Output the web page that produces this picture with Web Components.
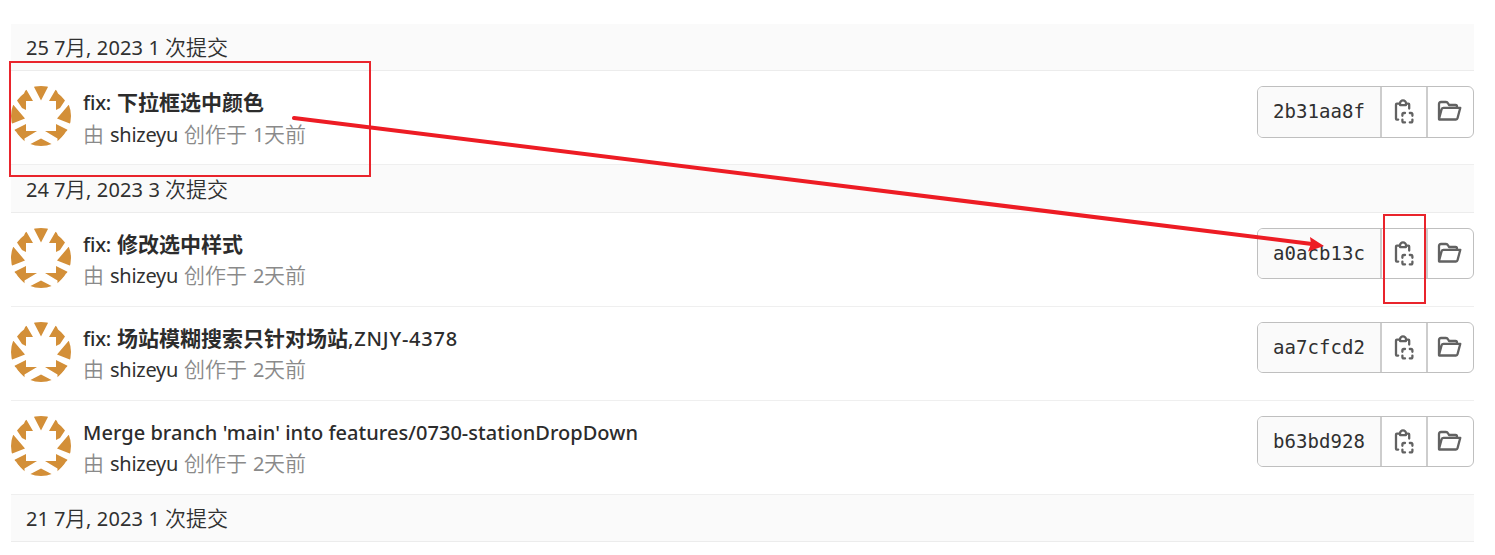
<!DOCTYPE html>
<html lang="zh-CN">
<head>
<meta charset="utf-8">
<title>提交</title>
<style>
html,body{margin:0;background:#fff}
body{width:1495px;height:555px;overflow:hidden;position:relative;font-family:"Noto Sans","Noto Sans CJK SC",sans-serif}
</style>
</head>
<body>
<commit-list>
  <commit-day><fit-text w="28">25 </fit-text><fit-text w="11">7</fit-text><fit-text w="21" cjk>月</fit-text><fit-text w="74">, 2023 1</fit-text><fit-text x="5" w="63" cjk>次提交</fit-text></commit-day>
  <commit-row style="--b:52px;--t:32px" sha="2b31aa8f" ago="1天前"><fit-text w="28">fix:</fit-text><fit-text x="6" w="147" cjk>下拉框选中颜色</fit-text></commit-row>
  <commit-day style="--h:48px;--p:10px"><fit-text w="28">24 </fit-text><fit-text w="11">7</fit-text><fit-text w="21" cjk>月</fit-text><fit-text w="74">, 2023 3</fit-text><fit-text x="5" w="63" cjk>次提交</fit-text></commit-day>
  <commit-row sha="a0acb13c" ago="2天前"><fit-text w="28">fix:</fit-text><fit-text x="6" w="126" cjk>修改选中样式</fit-text></commit-row>
  <commit-row sha="aa7cfcd2" ago="2天前"><fit-text w="28">fix:</fit-text><fit-text x="6" w="231" cjk>场站模糊搜索只针对场站</fit-text><fit-text w="110">,ZNJY-4378</fit-text></commit-row>
  <commit-row sha="b63bd928" ago="2天前"><fit-text w="555">Merge branch 'main' into features/0730-stationDropDown</fit-text></commit-row>
  <commit-day><fit-text w="28">21 </fit-text><fit-text w="11">7</fit-text><fit-text w="21" cjk>月</fit-text><fit-text w="74">, 2023 1</fit-text><fit-text x="5" w="63" cjk>次提交</fit-text></commit-day>
</commit-list>
<mark-layer></mark-layer>
<script>
const define = (name, html, init) => customElements.define(name, class extends HTMLElement {
  constructor() { super(); this.attachShadow({mode: 'open'}); }
  connectedCallback() {
    this.shadowRoot.innerHTML = typeof html === 'function' ? html(this) : html;
    if (init) init(this);
  }
});

define('commit-list', `<style>:host{display:block;padding:24px 21px 0 11px}</style><slot></slot>`);

define('commit-day', `<style>
:host{display:flex;align-items:baseline;box-sizing:border-box;height:var(--h,47px);padding:var(--p,9px) 15px 0 15px;background:#fafafa;border-bottom:1px solid #ececec;color:#303030;font-size:20px;line-height:30px;font-weight:400}
</style><slot></slot>`);

define('user-avatar', `<style>:host{display:block;width:60px;height:60px;flex:none}svg{display:block}</style>
<svg width="60" height="60" viewBox="0 0 60 60"><defs><clipPath id="c"><circle cx="30" cy="30" r="30"/></clipPath></defs>
<g clip-path="url(#c)" fill="#d38f38">
<path d="M22.5 0H37.5L30 14.5ZM19 60L18.5 58.5L30 52.5L41.5 58.5L41 60Z"/>
<g id="s"><path d="M15 3L22 15H15V24L11 22L6 14.5L10 10L13 7.5ZM-1 19H2.5L14 32.5L-1 38.5ZM2 44.5L15 38V45H26L13.5 52.5V56L11 53L7 48.5L5 45.5Z"/></g>
<use href="#s" transform="matrix(-1 0 0 1 60 0)"/>
</g></svg>`);

define('commit-row', el => `<style>
:host{display:flex;box-sizing:border-box;height:94px;padding-top:15px;border-bottom:1px solid #efefef}
.info{margin-left:12px;flex:1}
.title,.by{display:flex;white-space:nowrap;align-items:baseline}
.title{color:#2c2c2c;font-size:20px;font-weight:500;height:var(--t,31px);line-height:34px}
.by{color:#8a8a8a;font-size:20px;font-weight:400;height:31px;line-height:34px}
.name{color:#303030;font-weight:400}
</style>
<user-avatar></user-avatar>
<div class="info"><div class="title"><slot></slot></div>
<div class="by"><fit-text w="21" cjk>由</fit-text><fit-text class="name" x="6" w="68">shizeyu</fit-text><fit-text x="6" w="63" cjk>创作于</fit-text><fit-text x="6" w="11">${el.getAttribute('ago')[0]}</fit-text><fit-text w="42" cjk>${el.getAttribute('ago').slice(1)}</fit-text></div></div>
<commit-actions sha="${el.getAttribute('sha')}"></commit-actions>`);

define('commit-actions', el => `<style>
:host{display:flex;box-sizing:border-box;width:217px;height:var(--b,51px);border:1px solid #bfbfbf;border-radius:6px;overflow:hidden;background:#fff}
.sha{width:122px;flex:none;box-sizing:border-box;background:#fafafa;padding-left:15px;color:#303030;font:19px/49px "DejaVu Sans Mono","Liberation Mono",monospace}
.b{box-sizing:border-box;flex:none;border-left:2px solid #cdcdcd;width:46px;display:flex;align-items:center;justify-content:center}
.b:last-child{width:47px;padding-right:3px}
svg{display:block;fill:none;stroke:#626262;stroke-width:2.3;stroke-linecap:round;stroke-linejoin:round;margin-top:-2px}
</style>
<div class="sha"><fit-text w="92">${el.getAttribute('sha')}</fit-text></div>
<div class="b"><svg width="24" height="26" viewBox="0 0 24 26"><path d="M6.2 21.6H4.8Q4 21.6 4 20.8V6.4Q4 5.6 4.8 5.6H7M15 5.6H16.4Q17.2 5.6 17.2 6.4V10.5"/><path d="M8 7.1V5.4A3 3 0 0 1 14 5.4V7.1Z"/><path d="M10.4 17.8V16.4Q10.4 15 11.8 15H13M17.8 15H19Q20.4 15 20.4 16.4V17.8M20.4 21.6V23Q20.4 24.4 19 24.4H17.8M13 24.4H11.8Q10.4 24.4 10.4 23V21.6"/></svg></div>
<div class="b"><svg width="26" height="24" viewBox="0 0 26 24"><path d="M3 20V5Q3 3 5 3H10Q11.4 3 12 4.2L13 6H19.5Q21 6 21 7.4V8.5M3.2 20.5H20Q21.2 20.5 21.5 19.3L24.3 8.8H7.5Q6 8.8 5.6 10.2L3 20Z"/></svg></div>`);

define('mark-layer', `<style>:host{position:absolute;left:0;top:0;width:1495px;height:555px;pointer-events:none}svg{display:block}</style>
<svg width="1495" height="555" fill="none" stroke="#e9242c" stroke-width="2"><rect x="10" y="62" width="360" height="114"/><rect x="1384" y="215" width="41" height="88"/>
<path d="M294 118L1312 244" stroke="#ed1c24" stroke-width="4" stroke-linecap="round"/><path fill="#ed1c24" stroke="none" d="M1324 246L1308 251.5L1311 244L1310 237Z"/></svg>`);

/* A run of text whose letter spacing is set so that it fills the width w. */
define('fit-text', `<style>:host{display:inline-block;white-space:pre;flex:none}:host([cjk]){font-size:21px;line-height:21px;font-weight:350;font-family:"Noto Sans CJK SC",sans-serif}span{display:inline}</style><span><slot></slot></span>`, el => {
  const s = el.shadowRoot.querySelector('span'), w = +el.getAttribute('w');
  el.style.marginLeft = (el.getAttribute('x') || 0) + 'px';
  if (el.parentElement && el.parentElement.localName === 'commit-row' && el.hasAttribute('cjk')) el.style.fontWeight = 700;
  const n = [...el.textContent].length;
  s.style.letterSpacing = (w - s.getBoundingClientRect().width) / n + 'px';
  el.style.width = w + 'px';
});
</script>
</body>
</html>
